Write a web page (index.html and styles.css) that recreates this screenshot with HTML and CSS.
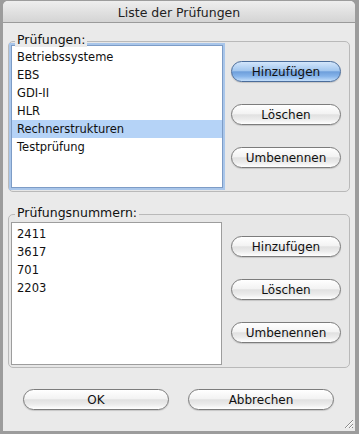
FILE: index.html
```html
<!DOCTYPE html>
<html lang="de">
<head>
    <meta charset="UTF-8">
    <meta name="viewport" content="width=device-width, initial-scale=1.0">
    <title>Liste der Prüfungen</title>
    <link rel="stylesheet" href="styles.css">
</head>
<body>
    <div class="window">
        <div class="titlebar">Liste der Prüfungen</div>

        <div class="group group-exams">
            <span class="group-label">Prüfungen:</span>
            <ul class="list list-focused">
                <li>Betriebssysteme</li>
                <li>EBS</li>
                <li>GDI-II</li>
                <li>HLR</li>
                <li class="selected">Rechnerstrukturen</li>
                <li>Testprüfung</li>
            </ul>
            <div class="buttons">
                <button class="btn btn-default">Hinzufügen</button>
                <button class="btn">Löschen</button>
                <button class="btn">Umbenennen</button>
            </div>
        </div>

        <div class="group group-numbers">
            <span class="group-label">Prüfungsnummern:</span>
            <ul class="list">
                <li>2411</li>
                <li>3617</li>
                <li>701</li>
                <li>2203</li>
            </ul>
            <div class="buttons">
                <button class="btn">Hinzufügen</button>
                <button class="btn">Löschen</button>
                <button class="btn">Umbenennen</button>
            </div>
        </div>

        <div class="footer">
            <button class="btn btn-wide">OK</button>
            <button class="btn btn-wide">Abbrechen</button>
        </div>

        <svg class="grip" width="12" height="12" viewBox="0 0 12 12">
            <path d="M11 3 L3 11 M11 7 L7 11 M11 10 L10 11" stroke="#8a8a8a" stroke-width="1" fill="none"/>
            <path d="M11 4 L4 11 M11 8 L8 11" stroke="#ffffff" stroke-width="1" fill="none"/>
        </svg>
    </div>
</body>
</html>
```

FILE: styles.css
```css
body {
    margin: 0;
    background: #9c9c9c;
    font-family: "DejaVu Sans", "Liberation Sans", sans-serif;
    color: #111;
}
.window {
    position: relative;
    margin: 1px 0 0 3px;
    width: 352px;
    height: 430px;
    background: #eaeaea;
    border-radius: 5px 5px 0 0;
    overflow: hidden;
}
.titlebar {
    height: 21px;
    line-height: 23px;
    text-align: center;
    font-size: 12.5px;
    color: #222;
    background: linear-gradient(to bottom, #eeeeee, #d4d4d4);
    border-bottom: 1px solid #9a9a9a;
}
.group {
    position: relative;
    display: flex;
    align-items: flex-start;
    margin: 0 5px;
    border: 1px solid #b9b9b9;
    border-radius: 5px;
    background: #e7e7e7;
}
.group-exams {
    margin-top: 18px;
    padding: 3px 2px 3px 2px;
}
.group-numbers {
    margin-top: 22px;
    padding: 7px 2px 2px 2px;
}
.group-label {
    position: absolute;
    top: -9px;
    left: 6px;
    padding: 0 2px;
    font-size: 12.5px;
    line-height: 14px;
    background: #eaeaea;
}
.list {
    list-style: none;
    margin: 0;
    padding: 2px 0 0;
    width: 209px;
    height: 139px;
    background: #fff;
    border: 1px solid #9d9d9d;
    font-size: 11.5px;
}
.list-focused {
    width: 210px;
    border-color: #7d9cc6;
    box-shadow: 0 0 0 2px #a9c6ea;
}
.list li {
    height: 18px;
    line-height: 18px;
    padding-left: 5px;
}
.list li.selected {
    background: #b5d3f7;
}
.buttons {
    display: flex;
    flex-direction: column;
    gap: 22px;
    margin-left: 8px;
    width: 110px;
}
.group-exams .buttons {
    padding-top: 16px;
}
.group-numbers .buttons {
    margin-left: 9px;
    padding-top: 14px;
}
.btn {
    height: 21px;
    padding: 0;
    border: 1px solid #7c7c7c;
    border-radius: 11px;
    font-family: "DejaVu Sans", "Liberation Sans", sans-serif;
    font-size: 12px;
    color: #111;
    background: linear-gradient(to bottom, #ffffff, #f3f3f3 45%, #e1e1e1 52%, #ebebeb 75%, #ffffff);
    box-shadow: 0 1px 1px rgba(0, 0, 0, 0.15);
}
.btn-default {
    border-color: #4a6c9a;
    background: linear-gradient(to bottom, #d3e6fb, #a3c7ef 45%, #6e9fdb 52%, #86b4ea 75%, #c3defa);
}
.footer {
    display: flex;
    gap: 19px;
    margin: 21px 0 0 20px;
}
.btn-wide {
    width: 146px;
}
.grip {
    position: absolute;
    right: 1px;
    bottom: 2px;
}
```
